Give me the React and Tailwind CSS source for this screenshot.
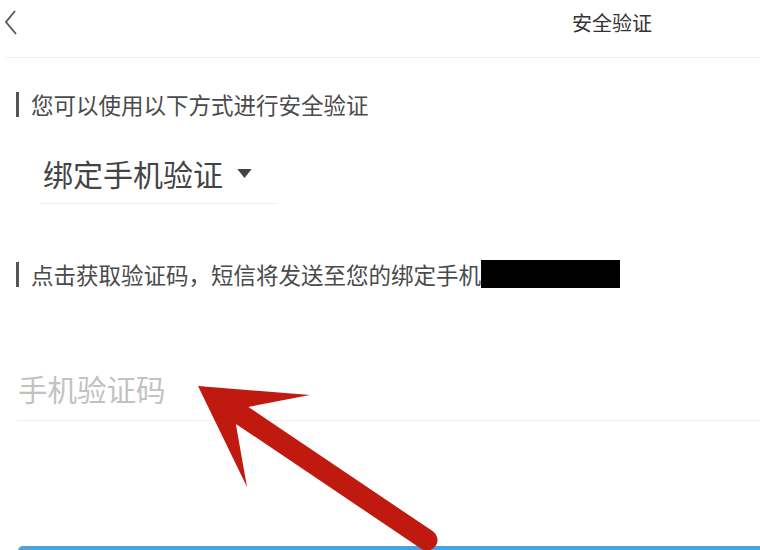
const font = { fontFamily: '"Noto Sans CJK SC", "Noto Sans", sans-serif' }

function SectionLabel({ children }) {
  return (
    <div className="flex items-center h-[28px] pl-[16px]">
      <span className="w-[3px] h-[25px] bg-[#555]" />
      <span className="ml-[12px] text-[22.5px] leading-[28px] text-[#4a4a4a] whitespace-nowrap">{children}</span>
    </div>
  )
}

export default function App() {
  return (
    <div className="relative w-full h-[550px] overflow-hidden bg-white" style={font}>
      {/* Top bar */}
      <header className="flex items-center h-[58px] ml-[5px] border-b border-[#f0f0f0]">
        <svg viewBox="0 0 14 26" className="w-[14px] h-[26px] -mt-[12px]">
          <polyline points="10,1 1,12 11,24" fill="none" stroke="#555" strokeWidth="1.8" strokeLinejoin="miter" />
        </svg>
        <h1 className="ml-auto mr-[108px] -mt-[12px] text-[20px] text-[#333] font-normal">安全验证</h1>
      </header>

      <div className="mt-[32px]">
        <SectionLabel>您可以使用以下方式进行安全验证</SectionLabel>
      </div>

      {/* Method picker */}
      <div className="mt-[35px] ml-[40px] w-[238px] pb-[10px] border-b border-[#f0f0f0]">
        <div className="flex items-center pl-[3px] text-[30px] leading-[40px] text-[#444]">
          绑定手机验证
          <svg viewBox="0 0 16 10" className="ml-[14px] w-[15px] h-[9px]">
            <path d="M0 0 H16 L8 10 Z" fill="#444" />
          </svg>
        </div>
      </div>

      <div className="mt-[56px] flex items-center">
        <SectionLabel>点击获取验证码，短信将发送至您的绑定手机</SectionLabel>
        <span className="w-[139px] h-[28px] bg-black" />
      </div>

      {/* Code input */}
      <div className="mt-[80px] ml-[17px] pb-[12px] border-b border-[#f0f0f0]">
        <input
          placeholder="手机验证码"
          className="block w-full h-[40px] pl-[1px] text-[29.5px] leading-[40px] text-[#333] placeholder:text-[#c2c2c2] outline-none"
          style={font}
        />
      </div>

      <div className="mt-[125px] ml-[18px] w-[760px] h-[48px] rounded-[5px] bg-[#4ba3dc]" />

      {/* Red annotation arrow */}
      <svg className="absolute inset-0 pointer-events-none" width="760" height="550" viewBox="0 0 760 550">
        <path d="M198 386 L310 395 L248 407 L236 425 L247 487 Z" fill="#c01a10" />
        <line x1="240" y1="414" x2="427" y2="540" stroke="#c01a10" strokeWidth="21" strokeLinecap="round" />
      </svg>
    </div>
  )
}
